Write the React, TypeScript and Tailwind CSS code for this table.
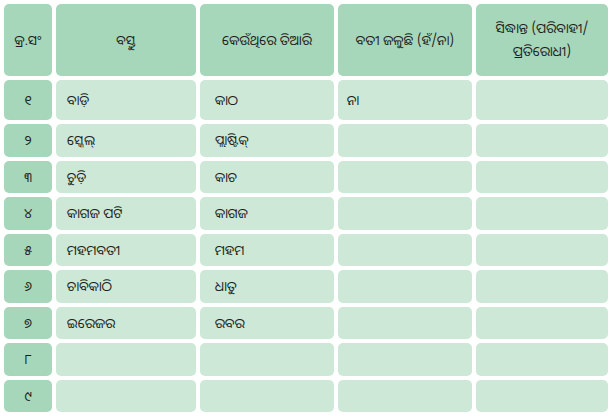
const headers = ['କ୍ର.ସଂ', 'ବସ୍ତୁ', 'କେଉଁଥିରେ ତିଆରି', 'ବତୀ ଜଳୁଛି (ହଁ/ନା)', 'ସିଦ୍ଧାନ୍ତ (ପରିବାହୀ/ ପ୍ରତିରୋଧୀ)']

const rows: [string, string, string, string][] = [
  ['୧', 'ବାଡ଼ି', 'କାଠ', 'ନା'],
  ['୨', 'ସ୍କେଲ୍', 'ପ୍ଲାଷ୍ଟିକ୍', ''],
  ['୩', 'ଚୁଡ଼ି', 'କାଚ', ''],
  ['୪', 'କାଗଜ ପଟି', 'କାଗଜ', ''],
  ['୫', 'ମହମବତୀ', 'ମହମ', ''],
  ['୬', 'ଚାବିକାଠି', 'ଧାତୁ', ''],
  ['୭', 'ଇରେଜର', 'ରବର', ''],
  ['୮', '', '', ''],
  ['୯', '', '', ''],
]

const heights = ['h-[40px]', 'h-[33px]', 'h-[32px]', 'h-[33px]', 'h-[32px]', 'h-[33px]', 'h-[32px]', 'h-[33px]', 'h-[32px]']
// left padding differs a bit per column in the source
const pads = ['pl-[11px]', 'pl-[15px]', 'pl-[9px]', 'pl-[9px]']

export default function App() {
  return (
    <div
      className="w-[613px] h-[416px] bg-white pt-[4px] pl-[4px] text-[#1e1e1e]"
      style={{ fontFamily: '"Noto Sans Oriya", "Noto Sans", "DejaVu Sans", sans-serif' }}
    >
      <div className="grid grid-cols-[48px_140px_134px_134px_132px] gap-x-[4px] gap-y-[4px]">
        {headers.map((h, i) => (
          <div
            key={i}
            className="h-[72px] rounded-[5px] bg-[#a7d7ba] flex items-center justify-center text-center text-[13.5px] leading-[23px] px-3"
          >
            {h}
          </div>
        ))}

        {rows.map((r, ri) => (
          <>
            <div
              key={'n' + ri}
              className={`${heights[ri]} rounded-[5px] bg-[#a7d7ba] flex items-center justify-center text-[13.5px]`}
            >
              {r[0]}
            </div>
            {[r[1], r[2], r[3], ''].map((c, ci) => (
              <div
                key={ri + '-' + ci}
                className={`${heights[ri]} ${pads[ci]} rounded-[5px] bg-[#cde8d7] flex items-center text-[13.5px]`}
              >
                {c}
              </div>
            ))}
          </>
        ))}
      </div>
    </div>
  )
}
